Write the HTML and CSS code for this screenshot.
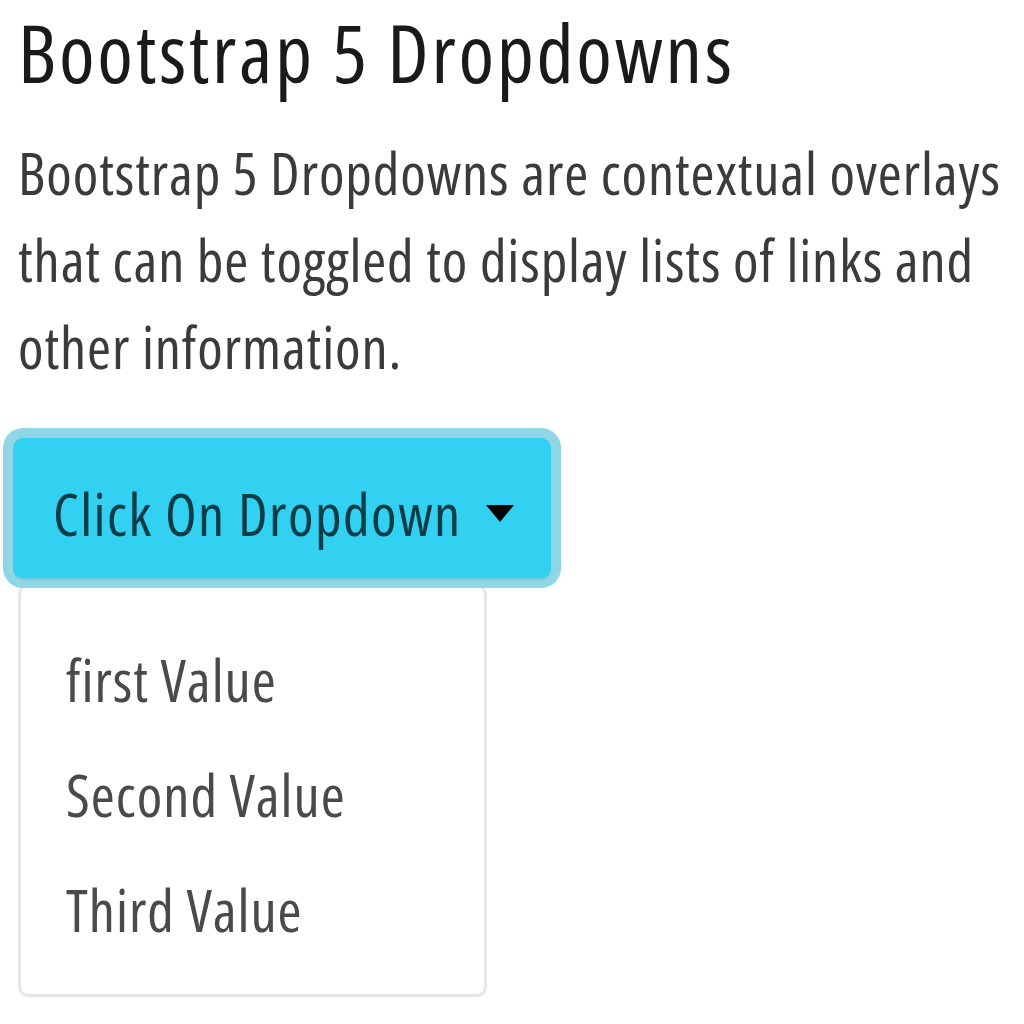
FILE: index.html
```html
<!DOCTYPE html>
<html lang="en">
<head>
<meta charset="utf-8">
<title>Bootstrap 5 Dropdowns</title>
<link rel="stylesheet" href="styles.css">
</head>
<body>
<main class="page">
  <h1 class="title">Bootstrap 5 Dropdowns</h1>
  <p class="lead-text">Bootstrap 5 Dropdowns are contextual overlays that can be toggled to display lists of links and other information.</p>
  <div class="dd">
    <button class="dd-toggle" type="button">Click On Dropdown<span class="dd-caret"></span></button>
    <ul class="dd-list">
      <li><a class="dd-item" href="#">first Value</a></li>
      <li><a class="dd-item" href="#">Second Value</a></li>
      <li><a class="dd-item" href="#">Third Value</a></li>
    </ul>
  </div>
</main>
</body>
</html>
```
FILE: styles.css
```css
html, body {
  margin: 0;
  padding: 0;
  background: #ffffff;
}

.page {
  box-sizing: border-box;
  min-height: 1024px;
  padding: 0 0 0 13px;
  font-family: "Open Sans", "Noto Sans", sans-serif;
  font-stretch: 75%;
}

.title {
  margin: -5px 0 0;
  padding-left: 5px;
  font-size: 81px;
  font-weight: 500;
  letter-spacing: 2.7px;
  line-height: 113px;
  color: #1a1a1a;
  white-space: nowrap;
}

.lead-text {
  margin: 21px 0 0;
  padding-left: 5px;
  width: 1000px;
  font-size: 58px;
  font-weight: 400;
  letter-spacing: 0.9px;
  line-height: 87px;
  color: #3b3b3b;
}

.dd {
  position: relative;
  display: inline-block;
  margin-top: 48px;
}

.dd-toggle {
  position: relative;
  z-index: 2;
  display: flex;
  align-items: baseline;
  margin: 0;
  padding: 32px 37px 21px 40px;
  border: none;
  border-radius: 10px;
  background: #32d1f1;
  box-shadow: 0 2px 0 0 #74c9dc, 0 0 0 10px #8fd6e7;
  font-family: inherit;
  font-stretch: 75%;
  font-size: 58px;
  letter-spacing: 1.5px;
  line-height: 87px;
  color: #0b3d48;
  cursor: pointer;
}

.dd-caret {
  display: inline-block;
  width: 0;
  height: 0;
  margin-left: 24px;
  border-top: 17px solid #000;
  border-left: 14px solid transparent;
  border-right: 14px solid transparent;
  transform: translateY(-14px);
}

.dd-list {
  position: absolute;
  z-index: 1;
  top: calc(100% + 6px);
  left: 5px;
  width: 463px;
  margin: 0;
  padding: 35px 0 27px;
  list-style: none;
  background: #ffffff;
  border: 3px solid #e6e6e6;
  border-radius: 10px;
}

.dd-item {
  display: block;
  padding: 14px 45px;
  font-size: 58px;
  letter-spacing: 1px;
  line-height: 87px;
  color: #4a4a4a;
  text-decoration: none;
  white-space: nowrap;
}
```
